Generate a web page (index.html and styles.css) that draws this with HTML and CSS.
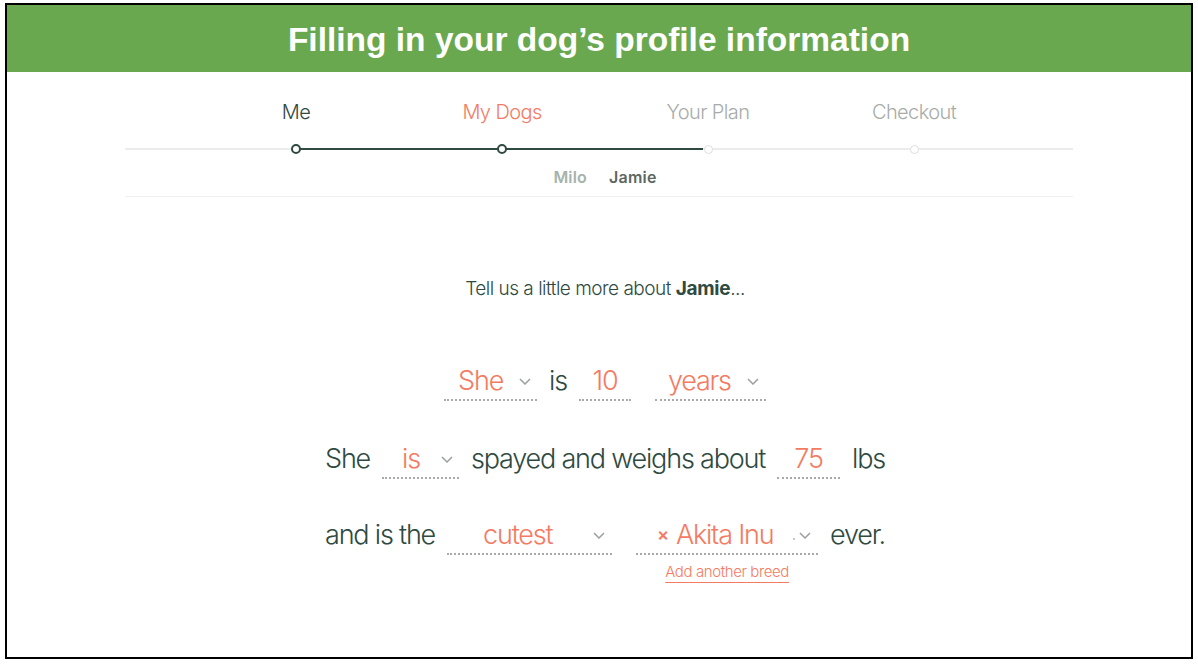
FILE: index.html
```html
<!DOCTYPE html>
<html>
  <head>
    <title>Filling in your dog's profile information</title>
    <meta charset="utf-8">
    <meta name="viewport" content="width=device-width, initial-scale=1">
    <link rel="stylesheet" href="styles.css">
</head>
<body>
<div class="frame">
  <div class="banner">Filling in your dog’s profile information</div>

  <div class="steps">
    <div class="step-grid labels">
      <div class="label done">Me</div>
      <div class="label current">My Dogs</div>
      <div class="label">Your Plan</div>
      <div class="label">Checkout</div>
    </div>
    <div class="track">
      <div class="progress"></div>
      <div class="step-grid dots">
        <span class="dot done"></span>
        <span class="dot done"></span>
        <span class="dot"></span>
        <span class="dot"></span>
      </div>
    </div>
    <div class="dogs">
      <span class="dog">Milo</span>
      <span class="dog active">Jamie</span>
    </div>
  </div>

  <div class="form">
    <p class="intro">Tell us a little more about <b>Jamie</b>...</p>

    <div class="sentence">
      <span class="field f-she">She <svg class="chev" width="12" height="7" viewBox="0 0 12 7"><polyline points="1,1 6,6 11,1"/></svg></span>
      <span class="word">is</span>
      <span class="field f-age">10</span>
      <span class="field f-unit">years <svg class="chev" width="12" height="7" viewBox="0 0 12 7"><polyline points="1,1 6,6 11,1"/></svg></span>
    </div>

    <div class="sentence">
      <span class="word">She</span>
      <span class="field f-is">is <svg class="chev" width="12" height="7" viewBox="0 0 12 7"><polyline points="1,1 6,6 11,1"/></svg></span>
      <span class="word">spayed and weighs about</span>
      <span class="field f-weight">75</span>
      <span class="word">lbs</span>
    </div>

    <div class="sentence">
      <span class="word">and is the</span>
      <span class="field f-cute">cutest <svg class="chev" width="12" height="7" viewBox="0 0 12 7"><polyline points="1,1 6,6 11,1"/></svg></span>
      <div class="breed">
        <span class="field f-breed"><span class="remove">×</span> Akita Inu <span class="caret"></span><svg class="chev" width="12" height="7" viewBox="0 0 12 7"><polyline points="1,1 6,6 11,1"/></svg></span>
        <a class="add" href="#">Add another breed</a>
      </div>
      <span class="word">ever.</span>
    </div>
  </div>
</div>
</body>
</html>
```

FILE: styles.css
```css
body {
  margin: 0;
  background-color: #fff;
  font-family: Inter, "Liberation Sans", sans-serif;
}
.frame {
  margin: 3px 5px;
  height: 652px;
  border: 2px solid #000;
}
.banner {
  height: 64px;
  padding-top: 3px;
  display: flex;
  align-items: center;
  justify-content: center;
  background-color: #6aa84f;
  color: #fff;
  font-family: "Liberation Sans", Arial, sans-serif;
  font-weight: bold;
  font-size: 33.5px;
}

/* stepper */
.steps {
  width: 948px;
  margin: 0 auto;
  padding-top: 28px;
  padding-bottom: 10px;
  border-bottom: 1px solid #f0f0f0;
}
.step-grid {
  display: grid;
  grid-template-columns: repeat(4, 206px);
  margin-left: 68px;
}
.label {
  text-align: center;
  font-size: 20px;
  line-height: 24px;
  font-weight: 300;
  letter-spacing: -0.6px;
  color: #a7aca9;
}
.label.done {
  color: #2e4a41;
}
.label.current {
  color: #f47b62;
}
.track {
  position: relative;
  height: 10px;
  margin-top: 20px;
}
.track::before {
  content: "";
  position: absolute;
  left: 0;
  right: 0;
  top: 4px;
  height: 2px;
  background-color: #ececec;
}
.progress {
  position: absolute;
  left: 171px;
  width: 407px;
  top: 4px;
  height: 2px;
  background-color: #2e4a41;
}
.dots {
  position: relative;
  height: 10px;
  align-items: center;
  justify-items: center;
}
.dot {
  width: 7px;
  height: 7px;
  border: 1px solid #dedede;
  border-radius: 50%;
  background-color: #fff;
}
.dot.done {
  width: 6px;
  height: 6px;
  border: 2px solid #2e4a41;
}
.dogs {
  display: flex;
  justify-content: center;
  gap: 22px;
  margin-top: 14px;
  margin-left: 12px;
  font-size: 16px;
  line-height: 18px;
  font-weight: 600;
  letter-spacing: 0.2px;
}
.dog {
  color: #a6b3aa;
}
.dog.active {
  color: #5d6762;
}

/* form */
.form {
  padding-left: 12px;
  color: #2e4a41;
}
.intro {
  margin: 80px 0 64px;
  text-align: center;
  font-size: 19px;
  line-height: 24px;
  font-weight: 300;
  letter-spacing: -0.5px;
}
.intro b {
  font-weight: 700;
  letter-spacing: -0.3px;
}
.sentence {
  display: flex;
  justify-content: center;
  align-items: flex-start;
  gap: 12px;
  margin-bottom: 42px;
  font-size: 27px;
  line-height: 32px;
  font-weight: 300;
  letter-spacing: -1.2px;
}
.sentence + .sentence + .sentence {
  margin-top: -2px;
}
.sentence:last-child {
  margin-bottom: 0;
}
.word,
.field {
  padding-bottom: 2px;
  border-bottom: 2px dotted transparent;
  white-space: nowrap;
}
.field {
  display: flex;
  align-items: center;
  box-sizing: border-box;
  color: #f47b62;
  border-bottom-color: #a9aaa9;
}
.chev {
  margin-left: auto;
  fill: none;
  stroke: #9aa09d;
  stroke-width: 1.5;
}
.f-she {
  width: 93px;
  padding-left: 14px;
  padding-right: 6px;
}
.f-age {
  width: 52px;
  justify-content: center;
}
.f-unit {
  width: 111px;
  margin-left: 12px;
  padding-left: 13px;
  padding-right: 7px;
}
.f-is {
  width: 77px;
  padding-left: 20px;
  padding-right: 6px;
}
.f-weight {
  width: 63px;
  justify-content: center;
}
.f-cute {
  width: 165px;
  padding-left: 36px;
  padding-right: 7px;
}
.breed {
  display: flex;
  flex-direction: column;
  align-items: center;
  margin-left: 12px;
}
.f-breed {
  width: 182px;
  padding-left: 21px;
  padding-right: 7px;
}
.remove {
  font-size: 18px;
  font-weight: 600;
  margin-right: 8px;
}
.caret {
  width: 2px;
  height: 2px;
  margin: 8px 4px 0 auto;
  background-color: #c8c8c8;
}
.caret + .chev {
  margin-left: 0;
}
.add {
  margin-top: 7px;
  font-size: 15px;
  line-height: 20px;
  font-weight: 300;
  letter-spacing: -0.4px;
  color: #f47b62;
  text-decoration: underline;
  text-underline-offset: 5px;
  text-decoration-thickness: 1px;
}
```
